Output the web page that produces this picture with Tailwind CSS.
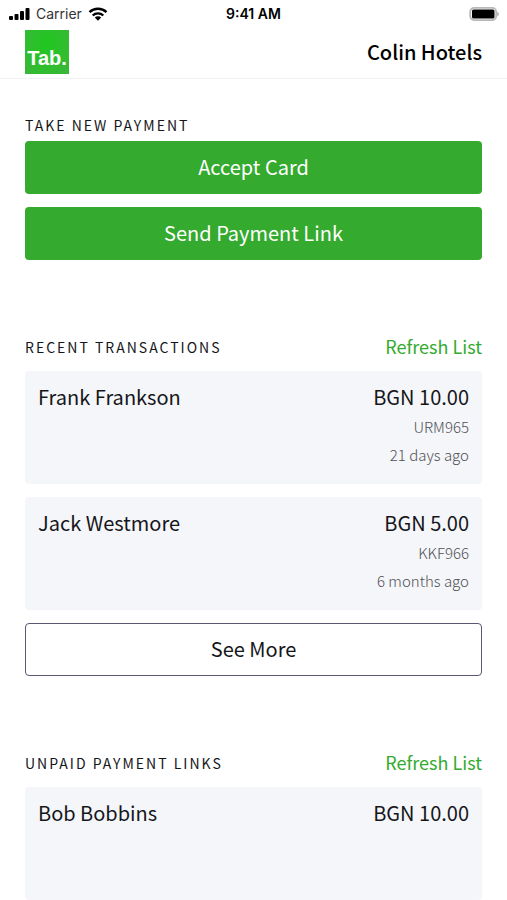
<!DOCTYPE html>
<html lang="en">
<head>
  <meta charset="utf-8">
  <meta name="viewport" content="width=device-width, initial-scale=1">
  <title>Tab. Payments</title>
  <script src="https://cdn.jsdelivr.net/npm/@tailwindcss/browser@4"></script>
</head>
<body class="bg-white text-[#15161a] font-['Noto_Sans_CJK_SC','Open_Sans',sans-serif]">

  <!-- status bar -->
  <div class="grid grid-cols-3 items-center h-7 px-2 text-black font-['Inter',sans-serif] text-sm">
    <div class="flex items-center gap-1.5">
      <svg class="w-[22px] h-3" viewBox="0 0 22 12" fill="currentColor" aria-hidden="true">
        <rect x="1" y="8" width="4" height="4" rx="1"/>
        <rect x="6.500" y="6" width="4" height="6" rx="1"/>
        <rect x="12" y="3" width="4" height="9" rx="1"/>
        <rect x="17.500" y="0" width="4" height="12" rx="1"/>
      </svg>
      <span class="text-[#333]">Carrier</span>
      <svg class="w-5 h-[14px]" viewBox="0 0 20 14" aria-hidden="true">
        <g fill="none" stroke="currentColor" stroke-width="2.400">
          <path d="M1.500 5.200a12.300 12.300 0 0 1 17 0"/>
          <path d="M4.700 8.500a7.700 7.700 0 0 1 10.600 0"/>
        </g>
        <path fill="currentColor" d="M10 13.800l-3.200-3.200a4.600 4.600 0 0 1 6.400 0z"/>
      </svg>
    </div>
    <div class="text-center font-semibold">9:41 AM</div>
    <div class="flex justify-end">
      <svg class="w-[30px] h-[14px]" viewBox="0 0 30 14" aria-hidden="true">
        <rect x="1.200" y="0.900" width="26" height="12.200" rx="3.800" fill="#fff" stroke="#b8b8b8" stroke-width="1.800"/>
        <rect x="3" y="2.500" width="22.500" height="9" rx="1.500" fill="#000"/>
        <path d="M28.300 4.800c2 .8 2 3.600 0 4.400z" fill="#a5a5a5"/>
      </svg>
    </div>
  </div>

  <header class="flex items-center justify-between px-[25px] pt-0.5 pb-1 border-b border-[#f3f3f3]">
    <a href="#" class="flex items-end justify-center size-11 pb-1 bg-radial-[at_50%_35%] from-[#1fc81f] to-[#3cb63a] text-white font-['Liberation_Sans',sans-serif] font-bold text-xl leading-6">Tab.</a>
    <h1 class="text-xl leading-7 font-medium text-black">Colin Hotels</h1>
  </header>

  <main class="px-[25px] pt-8">
    <section>
      <h2 class="pb-0.5 text-sm leading-7 tracking-[2px] uppercase">Take new payment</h2>
      <div class="flex flex-col gap-[13px]">
        <button type="button" class="h-[53px] pb-0.5 rounded bg-[#34aa2e] text-white text-xl">Accept Card</button>
        <button type="button" class="h-[53px] pb-0.5 rounded bg-[#34aa2e] text-white text-xl">Send Payment Link</button>
      </div>
    </section>

    <section class="mt-[73px]">
      <div class="flex items-start justify-between pb-2.5">
        <h2 class="text-sm leading-7 tracking-[2px] uppercase">Recent transactions</h2>
        <button type="button" class="text-lg leading-[26px] text-[#34aa2e]">Refresh List</button>
      </div>
      <div class="flex flex-col gap-[13px]">
        <article class="flex justify-between min-h-[113px] px-[13px] pt-2.5 rounded bg-[#f5f6fa]">
          <h3 class="text-xl leading-8">Frank Frankson</h3>
          <div class="text-right text-[15px] leading-7 text-[#505155] font-light">
            <p class="text-xl leading-8 text-[#15161a] font-normal">BGN 10.00</p>
            <p>URM965</p>
            <p>21 days ago</p>
          </div>
        </article>
        <article class="flex justify-between min-h-[113px] px-[13px] pt-2.5 rounded bg-[#f5f6fa]">
          <h3 class="text-xl leading-8">Jack Westmore</h3>
          <div class="text-right text-[15px] leading-7 text-[#505155] font-light">
            <p class="text-xl leading-8 text-[#15161a] font-normal">BGN 5.00</p>
            <p>KKF966</p>
            <p>6 months ago</p>
          </div>
        </article>
        <button type="button" class="h-[53px] pb-0.5 rounded border border-[#5a5870] bg-white text-xl">See More</button>
      </div>
    </section>

    <section class="mt-[73px]">
      <div class="flex items-start justify-between pb-2.5">
        <h2 class="text-sm leading-7 tracking-[2px] uppercase">Unpaid payment links</h2>
        <button type="button" class="text-lg leading-[26px] text-[#34aa2e]">Refresh List</button>
      </div>
      <article class="flex justify-between min-h-[113px] px-[13px] pt-2.5 rounded bg-[#f5f6fa]">
        <h3 class="text-xl leading-8">Bob Bobbins</h3>
        <p class="text-xl leading-8">BGN 10.00</p>
      </article>
    </section>
  </main>

</body>
</html>
